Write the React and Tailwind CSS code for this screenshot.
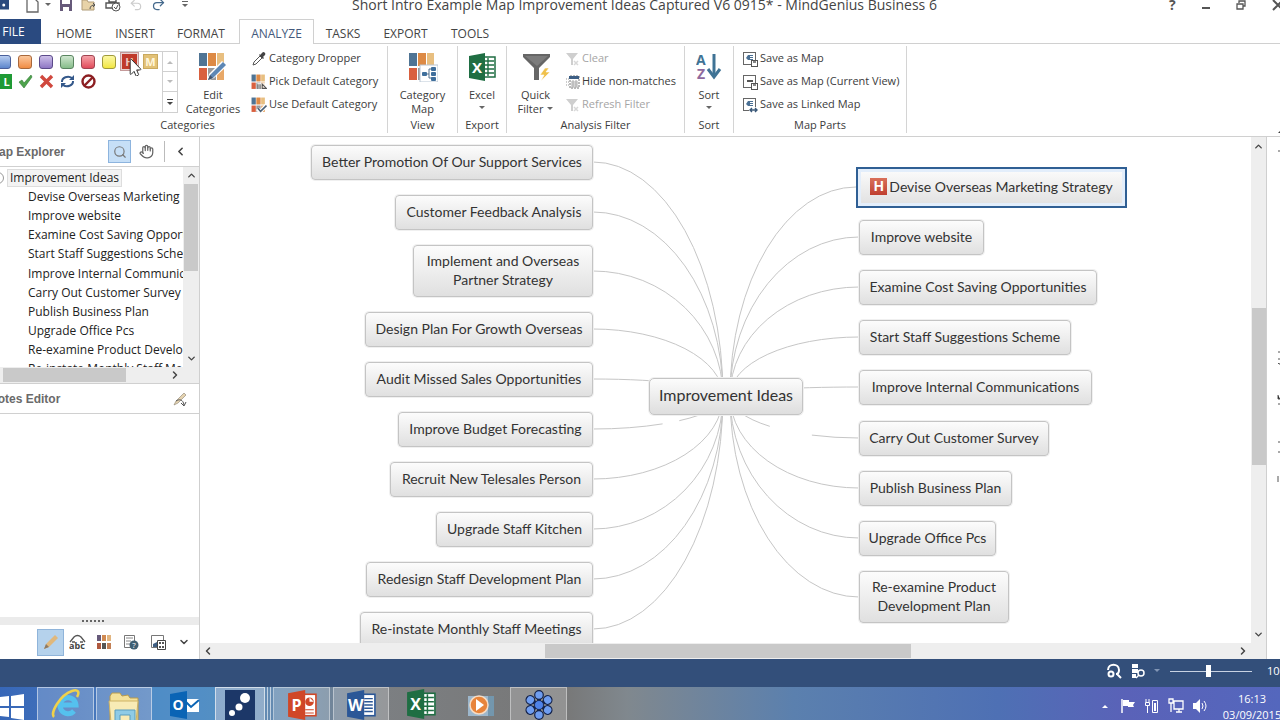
import { FaMousePointer } from 'react-icons/fa';
import { Search, Hand, ChevronLeft, ChevronRight, ChevronUp, ChevronDown, Undo2, Redo2 } from 'lucide-react';

/* ── Data ──────────────────────────────────────────────── */
const TABS = [
  { name: 'HOME', width: 'w-[66px]' },
  { name: 'INSERT', width: 'w-[56px]' },
  { name: 'FORMAT', width: 'w-[76px]' },
  { name: 'ANALYZE', width: 'w-[75px]' },
  { name: 'TASKS', width: 'w-[58px]' },
  { name: 'EXPORT', width: 'w-[67px]' },
  { name: 'TOOLS', width: 'w-[62px]' },
];

const SWATCHES = [
  { name: 'Blue', tone: 'border-[#4a5f9a] from-[#b8cdf0] to-[#5d86cc]' },
  { name: 'Orange', tone: 'border-[#a8683c] from-[#fbc79b] to-[#f08c42]' },
  { name: 'Purple', tone: 'border-[#5b4a8a] from-[#cdbfe8] to-[#8f77c4]' },
  { name: 'Green', tone: 'border-[#5a8560] from-[#cfe6cf] to-[#86bd8a]' },
  { name: 'Red', tone: 'border-[#a04450] from-[#f5a0a8] to-[#e04a5c]' },
  { name: 'Yellow', tone: 'border-[#a09a3c] from-[#fcf8a0] to-[#f2e63c]' },
];

const TREE = [
  'Devise Overseas Marketing',
  'Improve website',
  'Examine Cost Saving Opportunities',
  'Start Staff Suggestions Scheme',
  'Improve Internal Communications',
  'Carry Out Customer Survey',
  'Publish Business Plan',
  'Upgrade Office Pcs',
  'Re-examine Product Development',
  'Re-instate Monthly Staff Meetings',
];

// Coordinates are in canvas space
const LEFT_NODES = [
  { lines: ['Better Promotion Of Our Support Services'], x: 111, y: 8, w: 282, h: 35 },
  { lines: ['Customer Feedback Analysis'], x: 195, y: 58, w: 198, h: 35 },
  { lines: ['Implement and Overseas', 'Partner Strategy'], x: 213, y: 108, w: 180, h: 52 },
  { lines: ['Design Plan For Growth Overseas'], x: 165, y: 175, w: 228, h: 35 },
  { lines: ['Audit Missed Sales Opportunities'], x: 165, y: 225, w: 228, h: 35 },
  { lines: ['Improve Budget Forecasting'], x: 198, y: 275, w: 195, h: 35, gap: '38 12 50' },
  { lines: ['Recruit New Telesales Person'], x: 190, y: 325, w: 203, h: 35 },
  { lines: ['Upgrade Staff Kitchen'], x: 236, y: 375, w: 157, h: 35 },
  { lines: ['Redesign Staff Development Plan'], x: 166, y: 425, w: 227, h: 35 },
  { lines: ['Re-instate Monthly Staff Meetings'], x: 160, y: 475, w: 233, h: 35 },
];

const RIGHT_NODES = [
  { lines: ['Devise Overseas Marketing Strategy'], x: 656, y: 30, w: 271, h: 41, selected: true },
  { lines: ['Improve website'], x: 659, y: 83, w: 125, h: 35 },
  { lines: ['Examine Cost Saving Opportunities'], x: 659, y: 133, w: 238, h: 35 },
  { lines: ['Start Staff Suggestions Scheme'], x: 659, y: 183, w: 212, h: 35 },
  { lines: ['Improve Internal Communications'], x: 659, y: 233, w: 233, h: 35 },
  { lines: ['Carry Out Customer Survey'], x: 659, y: 284, w: 190, h: 35, gap: '37 30 33' },
  { lines: ['Publish Business Plan'], x: 659, y: 334, w: 153, h: 35 },
  { lines: ['Upgrade Office Pcs'], x: 659, y: 384, w: 137, h: 35 },
  { lines: ['Re-examine Product', 'Development Plan'], x: 659, y: 434, w: 150, h: 52 },
];

const HUB = { y: 259, left: 523, right: 530 };

/* ── Icons ─────────────────────────────────────────────── */
const Grid = ({ className, children }) => (
  <svg viewBox="0 0 30 30" className={className}>
    <rect x="1" y="1" width="8" height="13" fill="#4f7494" />
    <rect x="10" y="1" width="8" height="13" fill="#dd8a45" />
    <rect x="19" y="1" width="7" height="13" fill="#e8bf80" />
    <rect x="1" y="16" width="8" height="12" fill="#d9603f" />
    <rect x="10" y="16" width="8" height="12" fill="#9a9a9a" />
    <rect x="19" y="16" width="7" height="12" fill="#e8a868" />
    {children}
  </svg>
);

const EditGridIcon = () => (
  <Grid className="size-[30px]">
    <path d="M9 29l2-7L24 9l5 5-13 12z" fill="#fff" />
    <path d="M10 28l2-5L25 10l3 3-13 13z" fill="#5d87b5" />
    <path d="M10 28l2-5 3 3z" fill="#44546a" />
  </Grid>
);

const MapGridIcon = () => (
  <Grid className="size-[30px]">
    <rect x="12" y="13" width="18" height="17" fill="#fff" stroke="#b9c6d4" />
    <path d="M17 22h4M21 17v9M21 17h3M21 26h3" stroke="#52708c" fill="none" />
    <rect x="14" y="20" width="5" height="4" rx="1" fill="#3f6f9c" />
    <rect x="23" y="15" width="5" height="4" rx="1" fill="#3f6f9c" />
    <rect x="23" y="20" width="5" height="4" rx="1" fill="#3f6f9c" />
    <rect x="23" y="25" width="5" height="4" rx="1" fill="#3f6f9c" />
  </Grid>
);

const PickGridIcon = () => (
  <Grid className="size-4">
    <path d="M12 17h18v13H12z" fill="#fff" opacity=".8" />
    <path d="M13 19v9M17 19v9M21 19v8h8z" stroke="#555" strokeWidth="2" fill="none" />
  </Grid>
);

const UseGridIcon = () => (
  <Grid className="size-4">
    <path d="M12 22l5 6L29 15" stroke="#fff" strokeWidth="7" fill="none" />
    <path d="M13 21l5 6L29 16" stroke="#4a6076" strokeWidth="3" fill="none" />
  </Grid>
);

const DropperIcon = () => (
  <svg viewBox="0 0 16 16" className="size-4">
    <path d="M2 14l1-3 6-6 2 2-6 6z" fill="#fff" stroke="#555" />
    <path d="M8 4l4 4 1-1-1-1 2-2c1-1 0-3-2-3l-3 3-1-1z" fill="#444" />
  </svg>
);

const OfficeIcon = ({ letter = 'X', fill = '#1f6e43', className = 'size-7' }) => (
  <svg viewBox="0 0 28 28" className={className}>
    <rect x="13" y="4" width="14" height="20" fill="#fff" stroke={fill} strokeWidth="1.5" />
    {letter === 'X' && <path d="M14 8h12M14 12h12M14 16h12M14 20h12M20 5v18" stroke={fill} strokeWidth="1.4" />}
    {letter === 'W' && <path d="M17 8h8M17 11h8M17 14h8M17 17h8M17 20h8" stroke={fill} strokeWidth="1.3" />}
    {letter === 'P' && (
      <g fill={fill}>
        <circle cx="21" cy="11" r="4" />
        <path d="M17 18h8v1h-8zM17 21h8v1h-8z" />
        <path d="M21 11V7l4 4z" fill="#fff" />
      </g>
    )}
    <path d="M1 3l16-3v28L1 25z" fill={fill} />
    <text x="9" y="20" textAnchor="middle" fontSize="15" fontWeight="bold" fill="#fff" fontFamily="Open Sans, sans-serif">{letter}</text>
  </svg>
);

const FunnelIcon = () => (
  <svg viewBox="0 0 30 30" className="size-[30px]">
    <path d="M2 2h27v3L18 16v12h-5V16L2 5z" fill="#666" />
    <path d="M4 4h23L16 14z" fill="#7c7c7c" />
    <path d="M24 16l-5 7h4l-3 6 9-9h-4l3-4z" fill="#f0c14b" stroke="#fff" strokeWidth=".6" />
  </svg>
);

const SmallFunnelIcon = () => (
  <svg viewBox="0 0 16 16" className="size-4">
    <path d="M2 2h12L9 8v6H7V8z" fill="#cfcfcf" />
    <path d="M10 10l4 4M14 10l-4 4" stroke="#d8d8d8" strokeWidth="1.5" />
  </svg>
);

const HideIcon = () => (
  <svg viewBox="0 0 16 16" className="size-4">
    <path d="M2 5h3M2 8h3M2 11h3" stroke="#999" strokeDasharray="1 1" />
    <rect x="6" y="2" width="9" height="12" fill="#fff" stroke="#777" strokeDasharray="2 1" />
    <rect x="5" y="2" width="10" height="3" fill="#3d5f85" />
    <path d="M7 8h7M7 10h7M7 12h7M9 6v8M12 6v8" stroke="#aaa" />
  </svg>
);

const SortIcon = () => (
  <svg viewBox="0 0 26 30" className="h-[30px] w-[26px]">
    <text x="0" y="13" fontSize="14" fontWeight="bold" fill="#3f7395" fontFamily="Open Sans, sans-serif">A</text>
    <text x="1" y="27" fontSize="14" fontWeight="bold" fill="#8f6a9e" fontFamily="Open Sans, sans-serif">Z</text>
    <path d="M18 2v22" stroke="#3f7395" strokeWidth="3" />
    <path d="M12 17l6 8 6-8" stroke="#3f7395" strokeWidth="3" fill="none" />
  </svg>
);

const SaveMapIcon = ({ kind }) => (
  <svg viewBox="0 0 16 16" className="size-4">
    <rect x="1.5" y="1.5" width="12" height="12" fill="#fff" stroke="#666" />
    {kind === 'view' ? (
      <path d="M5 7h6" stroke="#555" strokeWidth="2" />
    ) : (
      <path d="M4 7l2-3h5v1H8v1h3v1H8v1h3v1H6z" fill="#4a7094" />
    )}
    {kind === 'link' ? (
      <g fill="none">
        <path d="M7 10h9v6H7z" fill="#fff" />
        <path d="M8 13h7M10 11l-2 2 2 2M13 11l2 2-2 2" stroke="#3a5878" strokeWidth="1.4" />
      </g>
    ) : (
      <g>
        <rect x="9.5" y="9.5" width="6" height="6" fill="#fff" stroke="#555" />
        <path d="M11 10h3v2h-3z" fill="#888" />
      </g>
    )}
  </svg>
);

const Caret = ({ className = 'text-[#666]' }) => (
  <svg viewBox="0 0 6 4" className={`h-1 w-1.5 ${className}`}>
    <path d="M0 0h6L3 3z" fill="currentColor" />
  </svg>
);

/* ── Title bar ─────────────────────────────────────────── */
const TitleBar = () => (
  <header className="flex h-[19px] shrink-0 items-center overflow-hidden bg-white pb-[10px] text-[#555]">
    <div className="flex w-[200px] shrink-0 items-center">
      <svg viewBox="0 0 12 16" className="h-4 w-[9px]">
        <rect width="12" height="14" fill="#2b4a7e" />
        <circle cx="5" cy="8" r="2" fill="#fff" />
      </svg>
      <button aria-label="New" className="ml-4">
        <svg viewBox="0 0 14 18" className="h-[18px] w-3.5"><path d="M2 2h7l4 4v10H2z" fill="#fff" stroke="#666" strokeWidth="1.3" /></svg>
      </button>
      <span className="ml-1.5"><Caret /></span>
      <button aria-label="Save" className="ml-2">
        <svg viewBox="0 0 14 14" className="size-3.5"><path d="M1 0h12v13H1z" fill="#66597a" /><path d="M3 0h8v6H3zM4 9h6v4H4z" fill="#fff" /></svg>
      </button>
      <button aria-label="Open" className="ml-2">
        <svg viewBox="0 0 16 14" className="h-3.5 w-4"><path d="M1 2h5l1 2h6v8H1z" fill="#e8d3a8" stroke="#b09c78" /><path d="M9 11c0-3 2-4 5-4M12 5l2 2-2 2" stroke="#555" fill="none" /></svg>
      </button>
      <button aria-label="Print preview" className="ml-2">
        <svg viewBox="0 0 16 14" className="h-3.5 w-4"><path d="M4 0h7v4H4zM1 5h13v5H1z" fill="#fff" stroke="#555" strokeWidth="1.4" /><circle cx="11" cy="9" r="4" fill="#fff" stroke="#555" /><path d="M9 9l2 2 2-4" stroke="#555" fill="none" /></svg>
      </button>
      <button aria-label="Undo" className="ml-2 text-[#ccc]"><Undo2 size={14} /></button>
      <button aria-label="Redo" className="ml-2 text-[#44698c]"><Redo2 size={15} /></button>
      <button aria-label="Customize" className="ml-4 flex flex-col items-center gap-0.5">
        <span className="h-px w-1.5 bg-[#666]" />
        <Caret />
      </button>
    </div>
    <h1 className="flex-1 pr-20 text-center text-[14px] leading-5 whitespace-nowrap text-[#444]">
      Short Intro Example Map Improvement Ideas Captured V6 0915* - MindGenius Business 6
    </h1>
    <div className="-mr-1 flex w-[115px] shrink-0 items-center justify-between">
      <button aria-label="Help" className="text-[14px] leading-4 font-bold">?</button>
      <button aria-label="Minimize" className="mt-1.5 h-0.5 w-2 bg-[#555]" />
      <button aria-label="Restore">
        <svg viewBox="0 0 10 10" className="size-2.5"><path d="M3 3V1h6v5H7M1 4h6v5H1z" fill="none" stroke="#555" strokeWidth="1.3" /></svg>
      </button>
      <button aria-label="Close">
        <svg viewBox="0 0 12 12" className="size-3"><path d="M1 1l10 10M11 1L1 11" stroke="#555" strokeWidth="2" /></svg>
      </button>
    </div>
  </header>
);

/* ── Ribbon tabs ───────────────────────────────────────── */
const RibbonTabs = () => (
  <nav className="flex h-[25px] shrink-0 border-b border-[#d0d0d0] bg-white text-[12px] text-[#444]">
    <button className="h-[25px] w-[41px] bg-[#2a4a80] pr-3.5 text-white">FILE</button>
    {TABS.map(tab => (
      <button
        key={tab.name}
        className={`${tab.width} h-[25px] pt-1 ${
          tab.name === 'ANALYZE' ? 'border border-b-0 border-[#d0d0d0] bg-white text-[#44597c]' : ''
        }`}
      >
        {tab.name}
      </button>
    ))}
  </nav>
);

/* ── Ribbon ────────────────────────────────────────────── */
const Group = ({ label, className, children }) => (
  <section className={`flex shrink-0 flex-col border-r border-[#d4d4d4] ${className}`}>
    <div className="flex flex-1 items-start">{children}</div>
    <h2 className="text-center text-[11px] leading-4">{label}</h2>
  </section>
);

const BigButton = ({ icon, lines, caret, inlineCaret, className }) => (
  <button className={`flex flex-col items-center pt-[5px] text-[11px] leading-[14px] ${className}`}>
    <span className="mb-[5px] flex h-[32px] items-center">{icon}</span>
    {lines.map((line, i) => (
      <span key={line} className="flex items-center gap-1 whitespace-nowrap">
        {line}
        {inlineCaret && i === lines.length - 1 && <Caret />}
      </span>
    ))}
    {caret && <span className="flex h-3 items-center"><Caret /></span>}
  </button>
);

const SmallButton = ({ icon, label, disabled }) => (
  <button
    disabled={disabled}
    className={`flex h-[23px] items-center gap-0.5 text-left text-[11px] whitespace-nowrap ${disabled ? 'text-[#a5a5a5]' : ''}`}
  >
    {icon}
    {label}
  </button>
);

const Gallery = () => (
  <div className="mt-[5px] flex h-[62px] w-[178px] border border-l-0 border-[#d0d0d0]">
    <div className="flex flex-1 flex-col overflow-hidden">
      <div className="-ml-[3px] flex h-[19px] items-center gap-[7px]">
        {SWATCHES.map(s => (
          <button key={s.name} aria-label={s.name} className={`size-3.5 shrink-0 rounded-[3px] border bg-linear-to-b ${s.tone}`} />
        ))}
        <button className="relative -ml-[3px] flex size-[19px] shrink-0 items-center justify-center border border-[#c49a9a] bg-[#e9d0cf]">
          <span className="size-[15px] bg-[#c03a2b] text-[11px] leading-[15px] font-bold text-[#f0c8bc]">H</span>
          <FaMousePointer className="absolute top-[6px] left-[6px] z-10 size-[17px] fill-white stroke-[#333] stroke-[30]" />
        </button>
        <button className="-ml-[3px] size-[15px] shrink-0 border border-[#c9a95e] bg-[#e2c176] text-[11px] leading-[13px] font-bold text-[#fff6dc]">M</button>
      </div>
      <div className="-ml-[3px] flex h-5 items-center gap-[6px]">
        <button className="size-[15px] shrink-0 bg-[#1f9a35] pl-1 text-[11px] leading-[15px] font-bold text-white">L</button>
        <button aria-label="Tick">
          <svg viewBox="0 0 15 15" className="size-[15px]"><path d="M1 8l3-2 2 3 7-8 1 2-8 11z" fill="#4ea34c" stroke="#2f7a34" strokeWidth=".6" /></svg>
        </button>
        <button aria-label="Cross">
          <svg viewBox="0 0 15 15" className="size-[15px]"><path d="M2 2l11 11M13 2L2 13" stroke="#d0483e" strokeWidth="3.4" /></svg>
        </button>
        <button aria-label="Refresh">
          <svg viewBox="0 0 15 15" className="size-[15px]"><path d="M2 8a6 5 0 0 1 10-4M13 7a6 5 0 0 1-10 4" stroke="#34588a" strokeWidth="2" fill="none" /><path d="M14 1v5H9zM1 14V9h5z" fill="#34588a" /></svg>
        </button>
        <button aria-label="Stop">
          <svg viewBox="0 0 15 15" className="size-[15px]"><circle cx="7.5" cy="7.5" r="6" fill="#fff" stroke="#8c1f22" strokeWidth="2.4" /><path d="M3.5 11.5l8-8" stroke="#8c1f22" strokeWidth="2.4" /></svg>
        </button>
      </div>
    </div>
    <div className="grid w-[15px] grid-rows-3 divide-y divide-[#d0d0d0] border-l border-[#d0d0d0]">
      <button aria-label="Scroll up" className="flex items-center justify-center"><Caret className="rotate-180 text-[#bbb]" /></button>
      <button aria-label="Scroll down" className="flex items-center justify-center"><Caret className="text-[#bbb]" /></button>
      <button aria-label="More categories" className="flex flex-col items-center justify-center gap-0.5">
        <span className="h-px w-1.5 bg-[#444]" />
        <Caret className="text-[#444]" />
      </button>
    </div>
  </div>
);

const Ribbon = () => (
  <div className="flex h-[93px] shrink-0 border-b border-[#d0d0d0] bg-white pt-0.5 pb-[3px] text-[#3c3c3c]">
    <Group label="Categories" className="w-[388px] [&>h2]:pr-3">
      <Gallery />
      <BigButton icon={<EditGridIcon />} lines={['Edit', 'Categories']} className="w-[70px]" />
      <div className="flex flex-col pt-px pl-[3px]">
        <SmallButton icon={<DropperIcon />} label="Category Dropper" />
        <SmallButton icon={<PickGridIcon />} label="Pick Default Category" />
        <SmallButton icon={<UseGridIcon />} label="Use Default Category" />
      </div>
    </Group>
    <Group label="View" className="w-[70px]">
      <BigButton icon={<MapGridIcon />} lines={['Category', 'Map']} className="w-full" />
    </Group>
    <Group label="Export" className="w-[49px]">
      <BigButton icon={<OfficeIcon />} lines={['Excel']} caret className="w-full" />
    </Group>
    <Group label="Analysis Filter" className="w-[178px]">
      <BigButton icon={<FunnelIcon />} lines={['Quick', 'Filter']} inlineCaret className="w-[57px]" />
      <div className="flex flex-col pt-px">
        <SmallButton icon={<SmallFunnelIcon />} label="Clear" disabled />
        <SmallButton icon={<HideIcon />} label="Hide non-matches" />
        <SmallButton icon={<SmallFunnelIcon />} label="Refresh Filter" disabled />
      </div>
    </Group>
    <Group label="Sort" className="w-[49px]">
      <BigButton icon={<SortIcon />} lines={['Sort']} caret className="w-full" />
    </Group>
    <Group label="Map Parts" className="w-[173px]">
      <div className="flex flex-col pt-px pl-2">
        <SmallButton icon={<SaveMapIcon />} label="Save as Map" />
        <SmallButton icon={<SaveMapIcon kind="view" />} label="Save as Map (Current View)" />
        <SmallButton icon={<SaveMapIcon kind="link" />} label="Save as Linked Map" />
      </div>
    </Group>
    <div className="flex flex-1 items-end justify-end overflow-hidden">
      <button aria-label="Collapse ribbon" className="-mr-1"><Caret className="rotate-180" /></button>
    </div>
  </div>
);

/* ── Sidebar ───────────────────────────────────────────── */
const Sidebar = () => (
  <aside className="flex w-[200px] shrink-0 flex-col overflow-hidden border-r border-[#cfcfcf] bg-white">
    <div className="flex h-[30px] shrink-0 items-center border-b border-[#d0d0d0]">
      <h2 className="-ml-[11px] flex-1 font-['Liberation_Sans',sans-serif] text-[12px] font-bold text-[#6a6a6a]">Map Explorer</h2>
      <button aria-label="Zoom" className="flex size-[23px] items-center justify-center border border-[#8db4de] bg-[#c6dff7] text-[#777]"><Search size={14} /></button>
      <button aria-label="Pan" className="ml-[5px] flex w-5 justify-center text-[#666]"><Hand size={15} /></button>
      <span className="ml-2 h-[21px] w-px bg-[#bbb]" />
      <button aria-label="Collapse panel" className="flex w-[34px] justify-center pr-1 text-[#444]"><ChevronLeft size={13} strokeWidth={3} /></button>
    </div>

    <div className="flex h-[200px] shrink-0 overflow-hidden text-[12px] text-[#222]">
      <ul className="flex h-[212px] flex-1 flex-col overflow-hidden pt-px whitespace-nowrap">
        <li className="flex flex-1 items-center">
          <button aria-label="Collapse branch" className="-ml-2 flex size-3 items-center justify-center rounded-full border border-[#999] bg-white">
            <span className="size-1 rounded-full bg-[#777]" />
          </button>
          <span className="ml-[3px] border border-[#ddd] bg-[#f3f3f3] px-0.5 leading-4">Improvement Ideas</span>
        </li>
        {TREE.map(item => (
          <li key={item} className="flex flex-1 items-center pl-7">{item}</li>
        ))}
      </ul>
      <div className="flex w-4 flex-col items-center bg-[#eee] text-[#444]">
        <button aria-label="Tree up" className="flex h-[17px] items-center"><ChevronUp size={11} strokeWidth={3} /></button>
        <div className="h-[87px] w-3.5 bg-[#c9c9c9]" />
        <div className="flex-1" />
        <button aria-label="Tree down" className="flex h-[17px] items-center"><ChevronDown size={11} strokeWidth={3} /></button>
      </div>
    </div>

    <div className="flex h-4 shrink-0 items-center bg-[#eee] text-[#444]">
      <div className="ml-[3px] h-3.5 w-[123px] bg-[#c9c9c9]" />
      <div className="flex-1" />
      <button aria-label="Tree right" className="mr-[18px]"><ChevronRight size={12} strokeWidth={3} /></button>
    </div>

    <div className="flex h-[31px] shrink-0 items-center border-y border-[#d0d0d0]">
      <h2 className="-ml-[11px] flex-1 font-['Liberation_Sans',sans-serif] text-[12px] font-bold text-[#6a6a6a]">Notes Editor</h2>
      <button aria-label="Edit notes" className="mr-3">
        <svg viewBox="0 0 14 14" className="size-3.5">
          <path d="M1 13l2-4 8-8 2 2-8 8z" fill="#e5d3b0" stroke="#8a8270" strokeWidth=".6" />
          <path d="M3 9c3-2 7-2 8 4M8 11l3 3 2-4" stroke="#555" fill="none" />
        </svg>
      </button>
    </div>
    <textarea aria-label="Notes" className="block w-full flex-1 resize-none bg-white outline-none" />

    <div className="flex h-2 shrink-0 items-center justify-center gap-0.5 bg-[#ebebeb] pr-3.5">
      {[0, 1, 2, 3, 4, 5].map(i => <span key={i} className="size-0.5 bg-[#666]" />)}
    </div>
    <div className="flex h-[34px] shrink-0 items-center pl-[37px]">
      <button aria-label="Notes" className="flex size-[27px] items-center justify-center border border-[#8fb4da] bg-[#b5d2ec]">
        <svg viewBox="0 0 16 16" className="size-4"><path d="M1 15l2-5L12 1l3 3-9 9z" fill="#e0b87c" /><path d="M1 15l2-5 3 3z" fill="#8c7a66" /></svg>
      </button>
      <button aria-label="Spelling" className="ml-[5px]">
        <svg viewBox="0 0 17 16" className="h-4 w-[17px]">
          <path d="M1 8L5 3c2-2 5-2 7 0l4 5M3 8h3M11 8h3" stroke="#555" strokeWidth="1.3" fill="none" />
          <text x="8" y="15" textAnchor="middle" fontSize="9" fontWeight="bold" fill="#444" fontFamily="Open Sans, sans-serif">abc</text>
        </svg>
      </button>
      <button aria-label="Categories" className="ml-[10px]">
        <svg viewBox="0 0 15 16" className="h-4 w-[15px]">
          <path d="M1 1h4v6H1z" fill="#66597a" /><path d="M6 1h4v6H6z" fill="#d08a52" /><path d="M11 1h4v6h-4z" fill="#e2b580" />
          <path d="M1 9h4v6H1z" fill="#b0593f" /><path d="M6 9h4v6H6z" fill="#555" /><path d="M11 9h4v6h-4z" fill="#c27f55" />
        </svg>
      </button>
      <button aria-label="Task help" className="ml-[12px]">
        <svg viewBox="0 0 16 16" className="size-4">
          <path d="M1.5 1.5h10v12h-10z" fill="#fff" stroke="#777" /><path d="M3 4h7M3 7h5M3 10h4" stroke="#888" />
          <circle cx="11" cy="11" r="4.5" fill="#3f5f73" /><text x="11" y="14" textAnchor="middle" fontSize="8" fill="#fff">?</text>
        </svg>
      </button>
      <button aria-label="Calendar" className="ml-[11px]">
        <svg viewBox="0 0 16 16" className="size-4">
          <path d="M1.5 1.5h12v12h-12z" fill="#fff" stroke="#777" /><path d="M3 13v-3l4-2v5z" fill="#3f5f83" />
          <path d="M7.5 6.5h8v9h-8z" fill="#fff" stroke="#444" /><path d="M9 8h2v2H9zM12 8h2v2h-2zM9 12h2v2H9zM12 12h2v2h-2z" fill="#555" />
        </svg>
      </button>
      <button aria-label="More panels" className="ml-3 text-[#444]"><ChevronDown size={12} strokeWidth={3} /></button>
    </div>
  </aside>
);

/* ── Map ───────────────────────────────────────────────── */
const branchPath = (node, side) => {
  const y = node.y + Math.floor(node.h / 2);
  const startX = HUB[side];
  const endX = side === 'left' ? node.x + node.w : node.x;
  const up = y < HUB.y;
  const sweep = side === 'left' ? (up ? 0 : 1) : (up ? 1 : 0);
  return `M${startX} ${HUB.y}A${Math.abs(endX - startX)} ${Math.abs(HUB.y - y)} 0 0 ${sweep} ${endX} ${y}`;
};

const MapNode = ({ node }) => (
  <div
    className={`absolute flex items-center justify-center bg-linear-to-b from-[#fcfcfc] to-[#e0e0e0] pb-[3px] text-[14px] leading-[19px] whitespace-nowrap text-[#333] ${
      node.selected ? 'border-2 border-[#2f5f94] ring-3 ring-inset ring-[#e3eefb]' : 'rounded-[4px] border border-[#c4c4c4] shadow-[0_0_0_1px_#f0f0f0]'
    }`}
    style={{ left: node.x, top: node.y, width: node.w, height: node.h }}
  >
    {node.selected && (
      <span className="mr-0.5 size-[17px] bg-linear-to-b from-[#d9705a] to-[#c03f30] text-center font-['Liberation_Sans',sans-serif] text-[14px] leading-[17px] font-bold text-white">H</span>
    )}
    <span className="text-center">
      {node.lines.map(line => <span key={line} className="block">{line}</span>)}
    </span>
  </div>
);

const MapView = () => (
  <main className="flex min-w-0 flex-1 flex-col">
    <div className="flex min-h-0 flex-1">
      <div className="relative min-w-0 flex-1 overflow-hidden bg-white font-[Lato,sans-serif]">
        <svg className="absolute inset-0 h-full w-full" fill="none" stroke="#c6c6c6">
          {LEFT_NODES.map(n => <path key={n.lines[0]} d={branchPath(n, 'left')} pathLength="100" strokeDasharray={n.gap} />)}
          {RIGHT_NODES.map(n => <path key={n.lines[0]} d={branchPath(n, 'right')} pathLength="100" strokeDasharray={n.gap} />)}
        </svg>
        {LEFT_NODES.map(n => <MapNode key={n.lines[0]} node={n} />)}
        {RIGHT_NODES.map(n => <MapNode key={n.lines[0]} node={n} />)}
        <div className="absolute top-[241px] left-[449px] flex h-[37px] w-[154px] items-center justify-center rounded-[5px] border border-[#c4c4c4] bg-linear-to-b from-[#fcfcfc] to-[#dedede] pb-[3px] text-[16px] whitespace-nowrap text-[#333] shadow-[0_0_0_1px_#f0f0f0]">
          Improvement Ideas
        </div>
      </div>
      <div className="flex w-[15px] shrink-0 flex-col items-center bg-[#eee] text-[#444]">
        <button aria-label="Scroll map up" className="flex h-[18px] items-center"><ChevronUp size={11} strokeWidth={3} /></button>
        <div className="flex-153" />
        <div className="w-3.5 flex-158 bg-[#c9c9c9]" />
        <div className="flex-161" />
        <button aria-label="Scroll map down" className="flex h-[17px] items-center"><ChevronDown size={11} strokeWidth={3} /></button>
      </div>
    </div>
    <div className="flex h-4 shrink-0 items-center bg-[#eee] pr-[15px] text-[#444]">
      <button aria-label="Scroll map left" className="flex w-4 justify-center"><ChevronLeft size={12} strokeWidth={3} /></button>
      <div className="flex-328" />
      <div className="h-3.5 flex-366 bg-[#c9c9c9]" />
      <div className="flex-323" />
      <button aria-label="Scroll map right" className="flex w-4 justify-center"><ChevronRight size={12} strokeWidth={3} /></button>
    </div>
  </main>
);

const SideStrip = () => (
  <div className="flex w-[14px] shrink-0 justify-end overflow-hidden border-l border-[#cfcfcf] bg-white">
    <svg viewBox="0 0 3 360" className="h-[360px] w-[3px]" stroke="#555">
      <path d="M1 14h2M1 215h2M1 226l1 1h1M1 222h2M1 258v4h2M1 267h2M1 305h2M1 315h2M1 339v6" />
    </svg>
  </div>
);

/* ── Status bar ────────────────────────────────────────── */
const StatusBar = () => (
  <footer className="flex h-7 shrink-0 items-center justify-end overflow-hidden bg-[#334f7a] pb-1 text-white">
    <button aria-label="Zoom to fit">
      <svg viewBox="0 0 16 16" className="size-4" fill="none" stroke="#fff" strokeWidth="2">
        <path d="M2 7c0-7 11-7 11 0 0 2-1 4-3 4M11 11l4 4" /><circle cx="5" cy="11" r="2.5" />
      </svg>
    </button>
    <button aria-label="Zoom to branch" className="ml-2">
      <svg viewBox="0 0 16 16" className="size-4">
        <path d="M2 1h6v4H2zM2 6h6v4H2zM2 11h4v4H2z" fill="#fff" />
        <circle cx="11" cy="10" r="3" fill="#334f7a" stroke="#fff" strokeWidth="1.5" /><path d="M9 12l-3 3" stroke="#fff" strokeWidth="1.5" />
      </svg>
    </button>
    <span className="ml-2"><Caret className="text-[#8296b5]" /></span>
    <input
      type="range"
      aria-label="Zoom"
      defaultValue={47}
      className="ml-[10px] h-3 w-[82px] appearance-none bg-transparent bg-[linear-gradient(#c8d2e2,#c8d2e2)] bg-[length:100%_1px] bg-center bg-no-repeat [&::-webkit-slider-thumb]:h-3 [&::-webkit-slider-thumb]:w-[5px] [&::-webkit-slider-thumb]:appearance-none [&::-webkit-slider-thumb]:bg-white"
    />
    <span className="-mr-5 ml-[15px] w-[33px] text-[11px]">100%</span>
  </footer>
);

/* ── Taskbar ───────────────────────────────────────────── */
const TaskButton = ({ label, className, children }) => (
  <button aria-label={label} className={`flex h-full shrink-0 items-start justify-center overflow-hidden ${className}`}>
    {children}
  </button>
);

const PETALS = [0, 60, 120, 180, 240, 300];

const Taskbar = () => (
  <footer className="flex h-[33px] shrink-0 overflow-hidden bg-[linear-gradient(90deg,#3767b8_0%,#5585be_14%,#668bb0_22%,#7c7f82_30%,#777_44%,#80888e_49%,#5b80ae_62%,#4e70b4_78%,#5a62b8_88%,#5467bd_100%)] text-white">
    <TaskButton label="Start" className="w-9 pt-1">
      <svg viewBox="0 0 36 30" className="h-[30px] w-9">
        <path d="M0 6l9-1v10H0zM11 5l13-2v12H11zM0 17h9v9l-9-1zM11 17h13v12l-13-2z" fill="#fff" />
      </svg>
    </TaskButton>
    <TaskButton label="Internet Explorer" className="ml-px w-[57px] border border-b-0 border-white/50 bg-white/20 pt-px">
      <svg viewBox="0 0 32 30" className="h-[30px] w-8">
        <path d="M24 22a8 8 0 1 1 2-6H11" stroke="#55c1ee" strokeWidth="5" fill="none" />
        <path d="M4 28C0 24 10 6 22 2c6-2 8 1 5 6" stroke="#f0d14a" strokeWidth="2.5" fill="none" />
      </svg>
    </TaskButton>
    <TaskButton label="File Explorer" className="ml-[2px] w-[56px] border border-b-0 border-white/50 bg-white/20 pt-1">
      <svg viewBox="0 0 32 30" className="h-[30px] w-8">
        <path d="M2 4l2-3h8l2 3 6-1 2 3h8v24H2z" fill="#f4e19a" stroke="#b89b4e" />
        <path d="M1 9h29l-2 21H3z" fill="#f8ebb5" stroke="#cdb366" />
        <path d="M7 30V18h20v12h-5v-7H12v7z" fill="#8ecbe6" stroke="#5b9dbd" />
      </svg>
    </TaskButton>
    <TaskButton label="Outlook" className="w-[63px] bg-[#4f94cc]/60 pt-1 pl-0.5">
      <svg viewBox="0 0 30 28" className="h-7 w-[30px]">
        <rect x="14" y="8" width="15" height="13" fill="#fff" />
        <path d="M15 10l6 6 8-7" stroke="#0a64b5" strokeWidth="2" fill="none" />
        <path d="M0 3l17-3v28L0 25z" fill="#0a64b5" />
        <text x="8" y="19" textAnchor="middle" fontSize="14" fontWeight="bold" fill="#fff" fontFamily="Open Sans, sans-serif">O</text>
      </svg>
    </TaskButton>
    <TaskButton label="MindGenius" className="w-[50px] border border-b-0 border-white/60 bg-white/30 pt-0.5">
      <svg viewBox="0 0 30 30" className="size-[30px]">
        <rect width="30" height="30" fill="#1c3768" />
        <circle cx="20" cy="8" r="5" fill="#fff" /><circle cx="14" cy="17" r="3.5" fill="#fff" /><circle cx="7" cy="23" r="3" fill="#fff" />
      </svg>
    </TaskButton>
    <span className="ml-0.5 w-px bg-white/60" />
    <span className="ml-0.5 w-px bg-white/60" />
    <TaskButton label="PowerPoint" className="ml-[2px] w-[57px] border border-b-0 border-white/40 bg-white/20 pt-0.5">
      <OfficeIcon letter="P" fill="#d04727" className="size-[30px]" />
    </TaskButton>
    <TaskButton label="Word" className="ml-[3px] w-[56px] border border-b-0 border-white/40 bg-white/20 pt-0.5">
      <OfficeIcon letter="W" fill="#2b5797" className="size-[30px]" />
    </TaskButton>
    <TaskButton label="Excel" className="ml-[2px] w-[60px] pt-0.5">
      <OfficeIcon className="size-[30px]" />
    </TaskButton>
    <TaskButton label="Media Player" className="w-[59px] pt-1.5">
      <svg viewBox="0 0 28 28" className="size-7">
        <path d="M1 3h20v20H1z" fill="#9db7cc" /><path d="M22 3v20M24 3v20M26 3v20" stroke="#6fb3e0" />
        <circle cx="12" cy="12" r="9" fill="#e8843a" stroke="#f6dcc4" strokeWidth="1.5" />
        <path d="M9 6l8 6-8 6z" fill="#fff" />
      </svg>
    </TaskButton>
    <TaskButton label="Webinar" className="w-[57px] border border-b-0 border-white/40 bg-white/20 pt-0.5">
      <svg viewBox="-15 -15 30 30" className="size-[30px]">
        {PETALS.map(a => (
          <g key={a} transform={`rotate(${a})`}>
            <path d="M0 0V-8" stroke="#14224a" strokeWidth="4" />
            <circle cy="-10" r="4.3" fill="#6f9df0" stroke="#14224a" strokeWidth="1.2" />
          </g>
        ))}
        <circle r="4.5" fill="#4f82e8" stroke="#14224a" strokeWidth=".8" />
      </svg>
    </TaskButton>
    <div className="flex-1" />
    <div className="flex items-center gap-2 pt-1">
      <Caret className="rotate-180 text-white" />
      <svg viewBox="0 0 16 16" className="ml-1 size-4"><path d="M2 1v14" stroke="#fff" strokeWidth="1.5" /><path d="M3 2h6v2h6l-2 3 1 2H8V8H3z" fill="#fff" /></svg>
      <svg viewBox="0 0 16 16" className="size-4" fill="none" stroke="#fff"><path d="M8.5 2.5h5v12h-5zM3.5 8v7M2 1v3M5 1v3M1.5 4.5h4v3h-4z" /><path d="M10 5h2v8h-2z" fill="#fff" stroke="none" /></svg>
      <svg viewBox="0 0 16 16" className="size-4" fill="none" stroke="#fff" strokeWidth="1.3"><path d="M6 3h9v8H6zM8 14h6M11 11v3M1 1h4v4H1zM3 5v9" /></svg>
      <svg viewBox="0 0 16 16" className="size-4"><path d="M1 5h3l4-4v14l-4-4H1z" fill="#fff" /><path d="M10 5q2 3 0 6M12 3q4 5 0 10" stroke="#fff" fill="none" /></svg>
    </div>
    <div className="-mr-1 ml-3 flex w-[64px] flex-col items-center pt-1 text-[11px] leading-4 whitespace-nowrap">
      <time>16:13</time>
      <time>03/09/2015</time>
    </div>
  </footer>
);

/* ── App ───────────────────────────────────────────────── */
const App = () => (
  <div className="flex h-screen flex-col overflow-hidden bg-white font-['Open_Sans','Noto_Sans',sans-serif]">
    <TitleBar />
    <RibbonTabs />
    <Ribbon />
    <div className="flex min-h-0 flex-1">
      <Sidebar />
      <MapView />
      <SideStrip />
    </div>
    <StatusBar />
    <Taskbar />
  </div>
);

export default App;
